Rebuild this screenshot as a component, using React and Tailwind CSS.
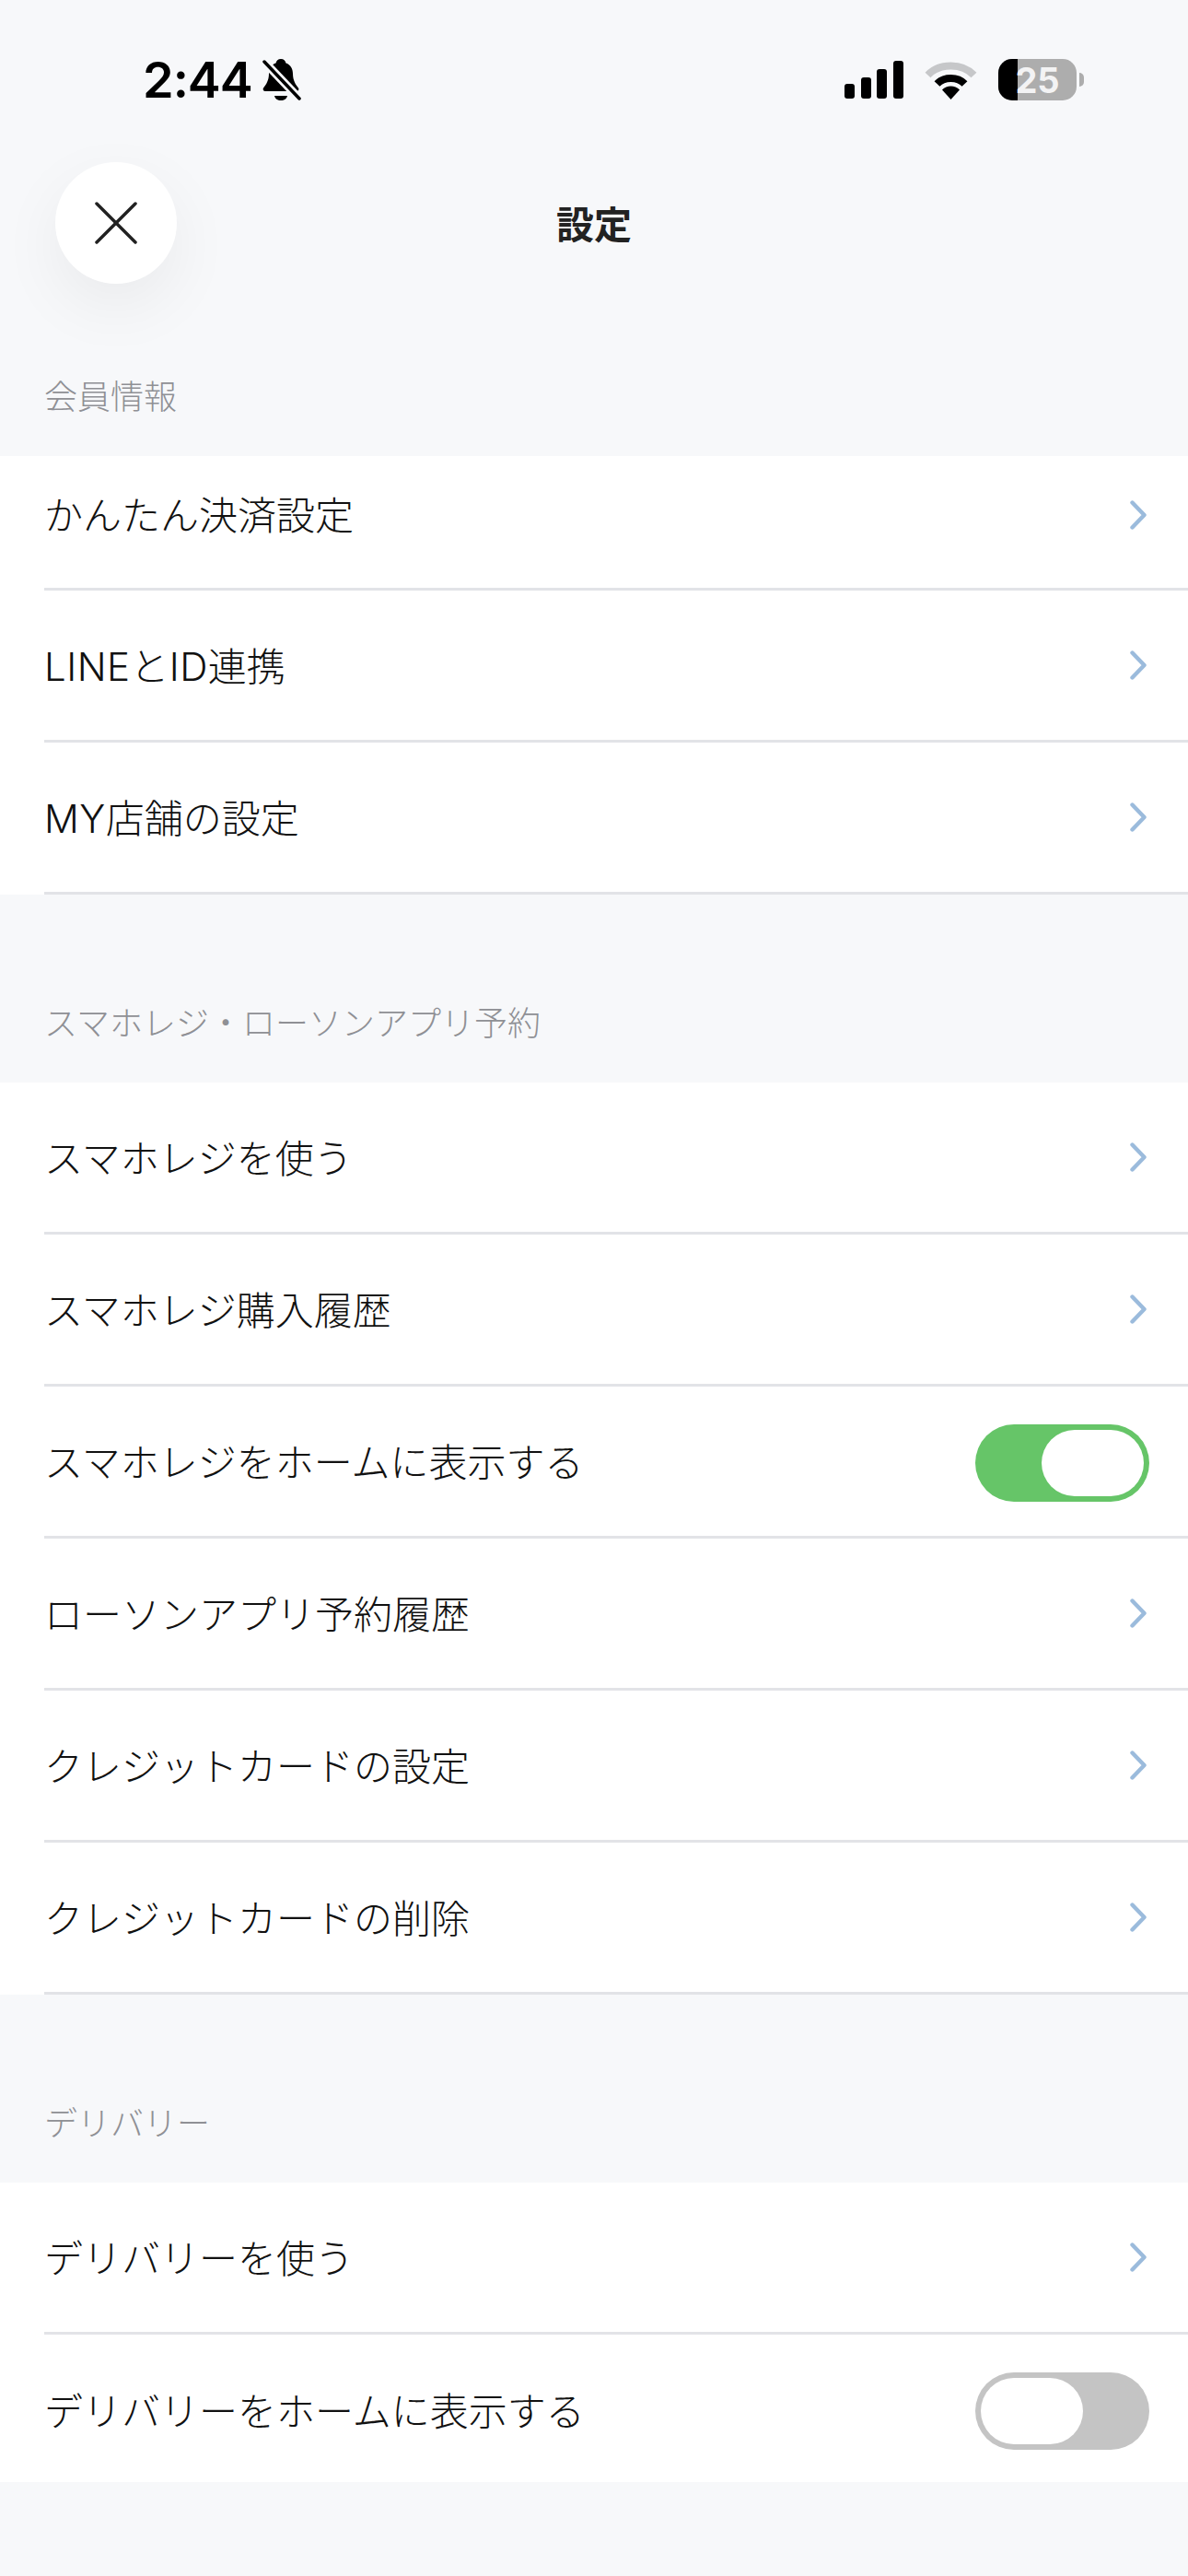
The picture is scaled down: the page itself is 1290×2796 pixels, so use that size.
import { X } from "lucide-react"

const jp = "font-['Noto_Sans_CJK_JP',sans-serif]"

function Chevron() {
  return (
    <svg width="18" height="32" viewBox="0 0 18 32" fill="none">
      <path d="M2.500 2.500 L15.500 16 L2.500 29.500" stroke="#9bbbdc" strokeWidth="4.400" strokeLinecap="round" strokeLinejoin="round" />
    </svg>
  )
}

function Toggle({ on }) {
  if (on) {
    return (
      <div className="flex h-[84px] w-[189px] items-center justify-end rounded-full bg-[#66c568] pr-[6px]">
        <div className="h-[72px] w-[111px] rounded-full bg-white" />
      </div>
    )
  }
  return (
    <div className="flex h-[84px] w-[189px] items-center justify-start rounded-full bg-[#c4c4c4] pl-[6px]">
      <div className="h-[72px] w-[111px] rounded-full bg-white" />
    </div>
  )
}

function Row({ label, toggle, last, first, latin }) {
  let inner = "border-b-[3px] border-[#e2e3e7]"
  if (first) inner += " pb-[16px]"
  if (last) inner = "pt-[6px]"
  return (
    <div className={"bg-white pl-12 " + (first ? "h-[146px]" : last ? "h-[160px]" : "h-[165px]")}>
      <div className={"flex h-full items-center justify-between " + inner}>
        <span className={"text-[42px] leading-none font-light text-[#111111] " + (latin ? "mb-0" : last ? "mb-[5px]" : "mb-[3px]")}>{label}</span>
        {toggle === undefined ? (
          <div className="mr-[45px] flex"><Chevron /></div>
        ) : (
          <div className={"mr-[42px] flex " + (last ? "" : "mt-[3px]")}><Toggle on={toggle} /></div>
        )}
      </div>
    </div>
  )
}

function SectionTitle({ children, className }) {
  return <div className={"pl-12 text-[36px] leading-none font-light text-[#8f9095] " + className}>{children}</div>
}

function StatusBar() {
  return (
    <div className="flex h-[176px] items-start justify-between pt-[64px] pl-[155px] pr-[113px]">
      <div className="flex items-center gap-[11px]">
        <span className="font-['Inter',sans-serif] text-[54px] leading-[46px] font-semibold tracking-[-1px] text-black">2:44</span>
        <svg width="42" height="46" viewBox="0 0 42 46" fill="none">
          <path d="M20 0c3 0 5 2 5.500 4.500C31 6.500 33 11 33 16c0 7 3 12 6 15.500c1 1.500 0 3.500-2 3.500H3c-2 0-3-2-2-3.500C4 28 7 23 7 16c0-5 2-9.500 7.500-11.500C15 2 17 0 20 0z" fill="black" />
          <path d="M13 40h14c-.5 3-3.500 5-7 5s-6.500-2-7-5z" fill="black" />
          <path d="M2 3 L40 43" stroke="#f7f8fa" strokeWidth="9" />
          <path d="M2 3 L40 43" stroke="black" strokeWidth="3.500" strokeLinecap="round" />
        </svg>
      </div>
      <div className="flex items-center gap-[23px]">
        <svg width="64" height="41" viewBox="0 0 64 41" fill="black">
          <rect x="0" y="25" width="11" height="16" rx="3" />
          <rect x="18" y="18" width="11" height="23" rx="3" />
          <rect x="35" y="9" width="11" height="32" rx="3" />
          <rect x="53" y="0" width="11" height="41" rx="3" />
        </svg>
        <svg width="57" height="42" viewBox="0 0 57 42" fill="none">
          <path d="M3.500 15.500 C16 2 41 2 53.500 15.500" stroke="#c6c7c9" strokeWidth="8" />
          <path d="M13.500 25 C21 17 36 17 43.500 25" stroke="black" strokeWidth="8" />
          <path d="M19 31.500 C24 26 33 26 38 31.500 L28.500 42 Z" fill="black" />
        </svg>
        <div className="flex items-center gap-[3px]">
          <div className="relative flex h-[45px] w-[85px] items-center justify-center overflow-hidden rounded-[15px] bg-[#adadad]">
            <div className="absolute inset-y-0 left-0 w-[21px] bg-black" />
            <span className="relative font-['Inter',sans-serif] text-[38px] leading-none font-bold text-[#f3f3f4]">25</span>
          </div>
          <div className="h-[15px] w-[5px] rounded-r-full bg-[#adadad]" />
        </div>
      </div>
    </div>
  )
}

function App() {
  return (
    <div className={"h-[2796px] w-[1290px] overflow-hidden bg-[#f7f8fa] " + jp}>
      <StatusBar />
      <div className="relative flex h-[133px] items-start justify-center">
        <div className="absolute left-[60px] top-0 flex h-[132px] w-[132px] items-center justify-center rounded-full bg-white shadow-[0_24px_70px_rgba(0,0,0,0.06)]">
          <X size={84} strokeWidth={1} color="#222222" />
        </div>
        <span className="mt-[45px] text-[41px] leading-none font-bold text-[#222222]">設定</span>
      </div>
      <SectionTitle className="pt-[101px] pb-[49px]">会員情報</SectionTitle>
      <Row first label="かんたん決済設定" />
      <Row latin label={<><span className="font-['Inter',sans-serif] tracking-[0.5px]">LINE</span>と<span className="font-['Inter',sans-serif] tracking-[0.5px]">ID</span>連携</>} />
      <Row latin label={<><span className="font-['Inter',sans-serif] tracking-[0.5px]">MY</span>店舗の設定</>} />
      <SectionTitle className="pt-[119px] pb-[49px]">スマホレジ・ローソンアプリ予約</SectionTitle>
      <Row label="スマホレジを使う" />
      <Row label="スマホレジ購入履歴" />
      <Row label="スマホレジをホームに表示する" toggle={true} />
      <Row label="ローソンアプリ予約履歴" />
      <Row label="クレジットカードの設定" />
      <Row label="クレジットカードの削除" />
      <SectionTitle className="pt-[119px] pb-[49px]">デリバリー</SectionTitle>
      <Row label="デリバリーを使う" />
      <Row last label="デリバリーをホームに表示する" toggle={false} />
    </div>
  )
}

export default App
